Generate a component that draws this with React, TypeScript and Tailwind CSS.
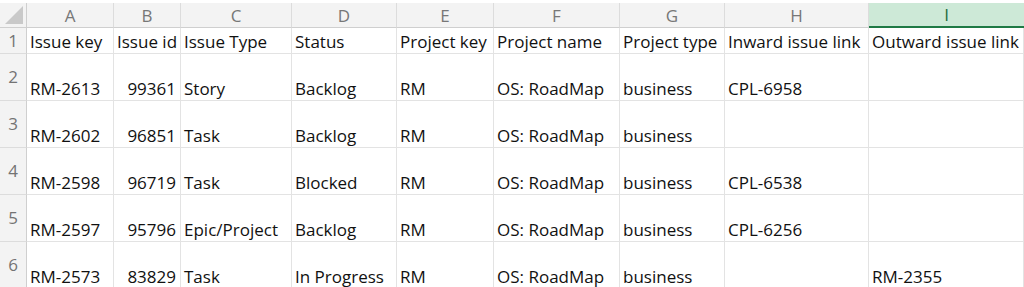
const COLS = ["A", "B", "C", "D", "E", "F", "G", "H", "I"];

type Cell = { text: string; right?: boolean };

const HEADER_ROW = [
  "Issue key",
  "Issue id",
  "Issue Type",
  "Status",
  "Project key",
  "Project name",
  "Project type",
  "Inward issue link",
  "Outward issue link",
];

const ROWS: string[][] = [
  ["RM-2613", "99361", "Story", "Backlog", "RM", "OS: RoadMap", "business", "CPL-6958", ""],
  ["RM-2602", "96851", "Task", "Backlog", "RM", "OS: RoadMap", "business", "", ""],
  ["RM-2598", "96719", "Task", "Blocked", "RM", "OS: RoadMap", "business", "CPL-6538", ""],
  ["RM-2597", "95796", "Epic/Project", "Backlog", "RM", "OS: RoadMap", "business", "CPL-6256", ""],
  ["RM-2573", "83829", "Task", "In Progress", "RM", "OS: RoadMap", "business", "", "RM-2355"],
];

const GRID = "grid grid-cols-[27px_87px_67px_111px_105px_97px_126px_105px_144px_1fr]";

function DataRow({ num, cells, height }: { num: number; cells: Cell[]; height: string }) {
  return (
    <div className={`${GRID} ${height}`}>
      <div className="flex items-center justify-center border-r border-b border-r-[#cfcfcf] border-b-[#dcdcdc] bg-[#f3f3f3] pb-[1px] text-[#737373]">
        {num}
      </div>
      {cells.map((c, i) => (
        <div
          key={i}
          className={`flex items-end overflow-hidden whitespace-nowrap border-r border-b border-[#e3e3e3] ${
            c.right ? "justify-end pr-[4px]" : "pl-[3px]"
          }`}
        >
          {c.text}
        </div>
      ))}
    </div>
  );
}

export default function App() {
  return (
    <div
      className="h-[287px] w-[1024px] overflow-hidden bg-white text-[17px] leading-[23px] text-[#111]"
      style={{ fontFamily: '"Open Sans", "Noto Sans", sans-serif' }}
    >
      <div className="pt-[3px]">
        <div className={`${GRID} h-[25px]`}>
          <div className="relative border-r border-b border-[#cfcfcf] bg-[#f3f3f3]">
            {/* select-all corner */}
            <svg className="absolute right-[3px] bottom-[3px]" width="18" height="18" viewBox="0 0 18 18">
              <polygon points="18,0 18,18 0,18" fill="#c9c9c9" />
            </svg>
          </div>
          {COLS.map((c) =>
            c === "I" ? (
              <div
                key={c}
                className="flex items-center justify-center border-b-2 border-[#1f7a45] bg-[#cde9d7] text-[#1f6e3e]"
              >
                {c}
              </div>
            ) : (
              <div
                key={c}
                className="flex items-center justify-center border-r border-b border-r-[#dcdcdc] border-b-[#cfcfcf] bg-[#f3f3f3] text-[#777]"
              >
                {c}
              </div>
            )
          )}
        </div>
      </div>

      <DataRow num={1} height="h-[26px]" cells={HEADER_ROW.map((t) => ({ text: t }))} />
      {ROWS.map((r, i) => (
        <DataRow
          key={i}
          num={i + 2}
          height="h-[47px]"
          cells={r.map((t, j) => ({ text: t, right: j === 1 }))}
        />
      ))}
    </div>
  );
}
